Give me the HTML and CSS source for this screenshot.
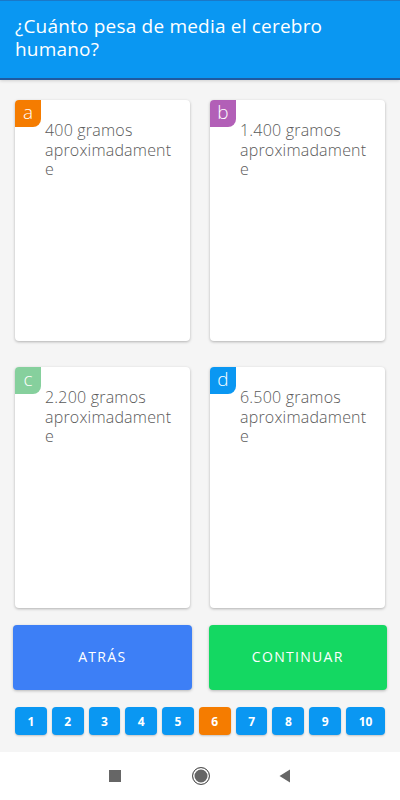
FILE: index.html
```html
<!DOCTYPE html>
<html lang="es">
<head>
<meta charset="utf-8">
<link rel="stylesheet" href="styles.css">
</head>
<body>
<div class="app">
  <header class="header">
    <h1 class="title">¿Cuánto pesa de media el cerebro humano?</h1>
  </header>
  <main class="content">
    <div class="grid">
      <div class="card"><span class="badge badge-a">a</span><p class="answer">400 gramos aproximadamente</p></div>
      <div class="card"><span class="badge badge-b">b</span><p class="answer">1.400 gramos aproximadamente</p></div>
      <div class="card"><span class="badge badge-c">c</span><p class="answer">2.200 gramos aproximadamente</p></div>
      <div class="card"><span class="badge badge-d">d</span><p class="answer">6.500 gramos aproximadamente</p></div>
    </div>
    <div class="actions">
      <button class="btn btn-back">ATRÁS</button>
      <button class="btn btn-next">CONTINUAR</button>
    </div>
    <div class="pages">
      <span class="page">1</span><span class="page">2</span><span class="page">3</span><span class="page">4</span><span class="page">5</span><span class="page current">6</span><span class="page">7</span><span class="page">8</span><span class="page">9</span><span class="page wide">10</span>
    </div>
  </main>
  <nav class="navbar">
    <span class="nav-square"></span>
    <span class="nav-home"></span>
    <svg class="nav-back" width="12" height="14" viewBox="0 0 12 14"><path d="M11 0.5 L11 13.5 L0.5 7 Z" fill="#666"/></svg>
  </nav>
</div>
</body>
</html>
```
FILE: styles.css
```css
* { box-sizing: border-box; }
html, body { margin: 0; padding: 0; }
body {
  width: 400px;
  height: 800px;
  background: #f5f5f5;
  font-family: "Open Sans", "Liberation Sans", sans-serif;
}
.app { display: flex; flex-direction: column; height: 800px; }
.header {
  background: #0a97f2;
  border-top: 1px solid #1a78c8;
  border-bottom: 2px solid #1f5aa0;
  height: 80px;
  padding: 14px 15px 0 15px;
  box-shadow: 0 1px 3px rgba(0,0,0,0.15);
}
.title {
  margin: 0;
  color: #ffffff;
  font-weight: 400;
  font-size: 19px;
  line-height: 23px;
  letter-spacing: 0.2px;
}
.content { flex: 1; padding: 20px 13px 0 13px; }
.grid {
  display: grid;
  grid-template-columns: 175px 175px;
  column-gap: 20px;
  row-gap: 26px;
  padding: 0 2px;
}
.card {
  position: relative;
  height: 241px;
  background: #fff;
  border-radius: 4px;
  box-shadow: 0 1px 3px rgba(0,0,0,0.28);
  padding: 21px 15px 0 30px;
}
.badge {
  position: absolute;
  left: 0; top: 0;
  width: 26px; height: 27px;
  color: #fff;
  font-size: 19px;
  font-weight: 300;
  line-height: 24px;
  text-align: center;
  border-radius: 4px 0 8px 0;
}
.badge-a { background: #f57c00; }
.badge-b { background: #b25fb7; }
.badge-c { background: #86d09d; }
.badge-d { background: #0a97f2; }
.answer {
  margin: 0;
  color: #5a5a5a;
  font-size: 16px;
  font-weight: 300;
  line-height: 19.5px;
  letter-spacing: 0.2px;
  overflow-wrap: anywhere;
}
.actions {
  display: flex;
  gap: 17px;
  margin-top: 17px;
}
.btn {
  flex: 1;
  height: 65px;
  border: none;
  border-radius: 4px;
  color: #fff;
  font-family: "Open Sans", "Liberation Sans", sans-serif;
  font-size: 14px;
  font-weight: 500;
  letter-spacing: 1.3px;
  padding-bottom: 3px;
  box-shadow: 0 1px 3px rgba(0,0,0,0.25);
}
.btn-back { background: #3d7ff6; }
.btn-next { background: #14d862; }
.pages {
  display: flex;
  gap: 5px;
  margin-top: 17px;
  padding: 0 2px;
}
.page {
  flex: 1;
  height: 28px;
  background: #0a97f2;
  color: #fff;
  border-radius: 4px;
  font-size: 12px;
  font-weight: 700;
  display: flex;
  align-items: center;
  justify-content: center;
  box-shadow: 0 1px 2px rgba(0,0,0,0.2);
}
.page.wide { flex: 0 0 39px; }
.page.current { background: #f57c00; }
.navbar {
  height: 48px;
  background: #fff;
  display: flex;
  align-items: center;
  justify-content: center;
}
.nav-square { width: 12px; height: 12px; background: #666; margin-right: 71px; }
.nav-home {
  width: 18px; height: 18px;
  border: 1.5px solid #555;
  border-radius: 50%;
  background: #666;
  box-shadow: inset 0 0 0 1.5px #fff;
  margin-right: 69px;
}
.nav-back { display: block; }
```
